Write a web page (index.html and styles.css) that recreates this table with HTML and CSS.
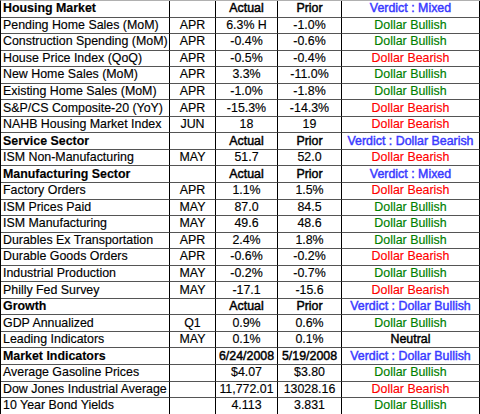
FILE: index.html
```html
<!DOCTYPE html>
<html>
<head>
<meta charset="utf-8">
<link rel="stylesheet" href="styles.css">
</head>
<body>
<table class="grid">
<colgroup>
<col class="c1"><col class="c2"><col class="c3"><col class="c4"><col class="c5">
</colgroup>
<tbody>
<tr class="head"><td>Housing Market</td><td></td><td>Actual</td><td>Prior</td><td class="verdict">Verdict : Mixed</td></tr>
<tr><td>Pending Home Sales (MoM)</td><td>APR</td><td>6.3% H</td><td>-1.0%</td><td class="bull">Dollar Bullish</td></tr>
<tr><td>Construction Spending (MoM)</td><td>APR</td><td>-0.4%</td><td>-0.6%</td><td class="bull">Dollar Bullish</td></tr>
<tr><td>House Price Index (QoQ)</td><td>APR</td><td>-0.5%</td><td>-0.4%</td><td class="bear">Dollar Bearish</td></tr>
<tr><td>New Home Sales (MoM)</td><td>APR</td><td>3.3%</td><td>-11.0%</td><td class="bull">Dollar Bullish</td></tr>
<tr><td>Existing Home Sales (MoM)</td><td>APR</td><td>-1.0%</td><td>-1.8%</td><td class="bull">Dollar Bullish</td></tr>
<tr><td>S&amp;P/CS Composite-20 (YoY)</td><td>APR</td><td>-15.3%</td><td>-14.3%</td><td class="bear">Dollar Bearish</td></tr>
<tr><td>NAHB Housing Market Index</td><td>JUN</td><td>18</td><td>19</td><td class="bear">Dollar Bearish</td></tr>
<tr class="head"><td>Service Sector</td><td></td><td>Actual</td><td>Prior</td><td class="verdict">Verdict : Dollar Bearish</td></tr>
<tr><td>ISM Non-Manufacturing</td><td>MAY</td><td>51.7</td><td>52.0</td><td class="bear">Dollar Bearish</td></tr>
<tr class="head"><td>Manufacturing Sector</td><td></td><td>Actual</td><td>Prior</td><td class="verdict">Verdict : Mixed</td></tr>
<tr><td>Factory Orders</td><td>APR</td><td>1.1%</td><td>1.5%</td><td class="bear">Dollar Bearish</td></tr>
<tr><td>ISM Prices Paid</td><td>MAY</td><td>87.0</td><td>84.5</td><td class="bull">Dollar Bullish</td></tr>
<tr><td>ISM Manufacturing</td><td>MAY</td><td>49.6</td><td>48.6</td><td class="bull">Dollar Bullish</td></tr>
<tr><td>Durables Ex Transportation</td><td>APR</td><td>2.4%</td><td>1.8%</td><td class="bull">Dollar Bullish</td></tr>
<tr><td>Durable Goods Orders</td><td>APR</td><td>-0.6%</td><td>-0.2%</td><td class="bear">Dollar Bearish</td></tr>
<tr><td>Industrial Production</td><td>MAY</td><td>-0.2%</td><td>-0.7%</td><td class="bull">Dollar Bullish</td></tr>
<tr><td>Philly Fed Survey</td><td>MAY</td><td>-17.1</td><td>-15.6</td><td class="bear">Dollar Bearish</td></tr>
<tr class="head"><td>Growth</td><td></td><td>Actual</td><td>Prior</td><td class="verdict">Verdict : Dollar Bullish</td></tr>
<tr><td>GDP Annualized</td><td>Q1</td><td>0.9%</td><td>0.6%</td><td class="bull">Dollar Bullish</td></tr>
<tr><td>Leading Indicators</td><td>MAY</td><td>0.1%</td><td>0.1%</td><td class="neutral">Neutral</td></tr>
<tr class="head"><td>Market Indicators</td><td></td><td>6/24/2008</td><td>5/19/2008</td><td class="verdict">Verdict : Dollar Bullish</td></tr>
<tr><td>Average Gasoline Prices</td><td></td><td>$4.07</td><td>$3.80</td><td class="bull">Dollar Bullish</td></tr>
<tr><td>Dow Jones Industrial Average</td><td></td><td>11,772.01</td><td>13028.16</td><td class="bear">Dollar Bearish</td></tr>
<tr><td>10 Year Bond Yields</td><td></td><td>4.113</td><td>3.831</td><td class="bull">Dollar Bullish</td></tr>
</tbody>
</table>
</body>
</html>
```
FILE: styles.css
```css
html, body {
  margin: 0;
  padding: 0;
  background: #fff;
}
.grid {
  border-collapse: separate;
  border-spacing: 0;
  table-layout: fixed;
  width: 479px;
  font-family: "Liberation Sans", Arial, sans-serif;
  font-size: 12.4px;
  color: #000;
  border-top: 1px solid #b0b0b0;
  border-left: 1px solid #000;
}
.c1 { width: 169px; }
.c2 { width: 46px; }
.c3 { width: 62px; }
.c4 { width: 64px; }
.c5 { width: 138px; }
.grid td {
  height: 15.56px;
  padding: 0;
  border-right: 1px solid #000;
  border-bottom: 1px solid #555;
  text-align: center;
  white-space: nowrap;
  overflow: hidden;
  line-height: 15px;
  -webkit-text-stroke: 0.15px currentColor;
}
.grid td:first-child {
  text-align: left;
  padding-left: 2px;
}
.head td {
  -webkit-text-stroke: 0.45px currentColor;
}
.head td:first-child {
  font-weight: bold;
  -webkit-text-stroke: 0.15px currentColor;
}
.verdict { color: #3a3aff; }
.bull { color: #008000; }
.bear { color: #ff0000; }
.grid td.neutral {
  color: #000;
  -webkit-text-stroke: 0.45px currentColor;
}
```
